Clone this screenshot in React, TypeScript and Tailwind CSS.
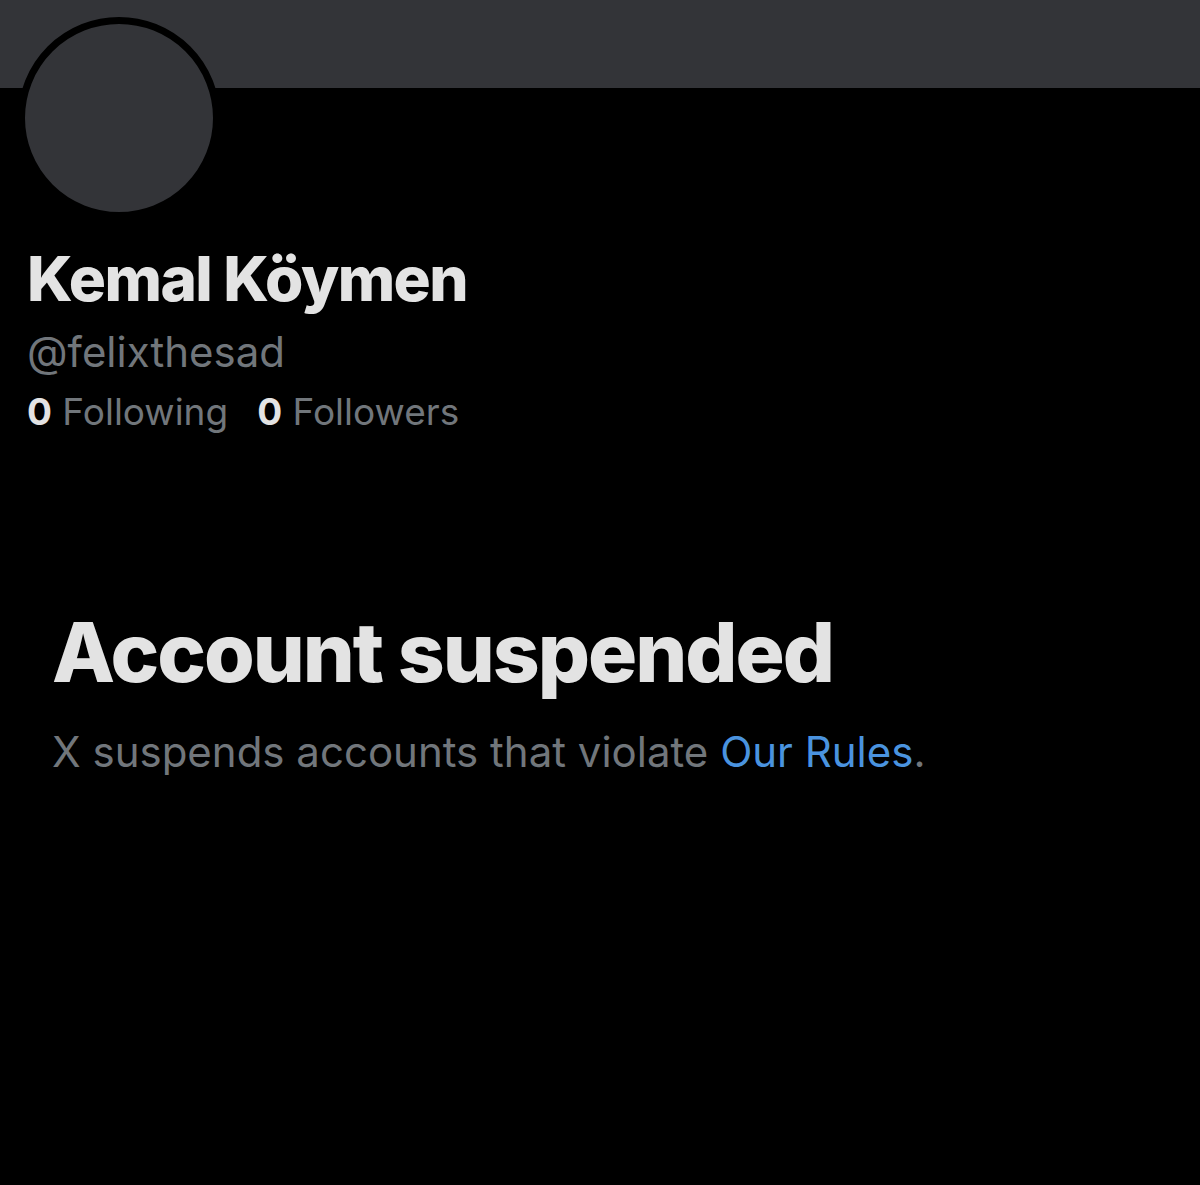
export default function App() {
  return (
    <div
      className="w-[1200px] h-[1185px] bg-black overflow-hidden"
      style={{ fontFamily: "Inter, 'Noto Sans', sans-serif" }}
    >
      <div className="h-[88px] bg-[#333438]" />
      <div className="ml-[18px] -mt-[71px] w-[202px] h-[202px] rounded-full border-[7px] border-black bg-[#333438]" />

      <div className="pl-[27px]">
        <h1 className="mt-[24px] text-[62px] leading-[72px] font-extrabold text-[#e3e3e3] tracking-[-0.025em]">
          Kemal Köymen
        </h1>
        <p className="mt-[12px] text-[42px] leading-[50px] text-[#71767b]">
          @felixthesad
        </p>
        <div className="mt-[13px] flex gap-[29px] text-[37px] leading-[44px] text-[#71767b]">
          <span>
            <span className="font-bold text-[#e3e3e3]">0</span> Following
          </span>
          <span>
            <span className="font-bold text-[#e3e3e3]">0</span> Followers
          </span>
        </div>
      </div>

      <div className="pl-[52px]">
        <h2 className="mt-[171px] text-[82px] leading-[96px] font-extrabold text-[#e3e3e3] tracking-[-0.025em]">
          Account suspended
        </h2>
        <p className="mt-[26px] text-[42px] leading-[50px] text-[#71767b]">
          X suspends accounts that violate{" "}
          <span className="text-[#4a93df]">Our Rules</span>.
        </p>
      </div>
    </div>
  );
}
